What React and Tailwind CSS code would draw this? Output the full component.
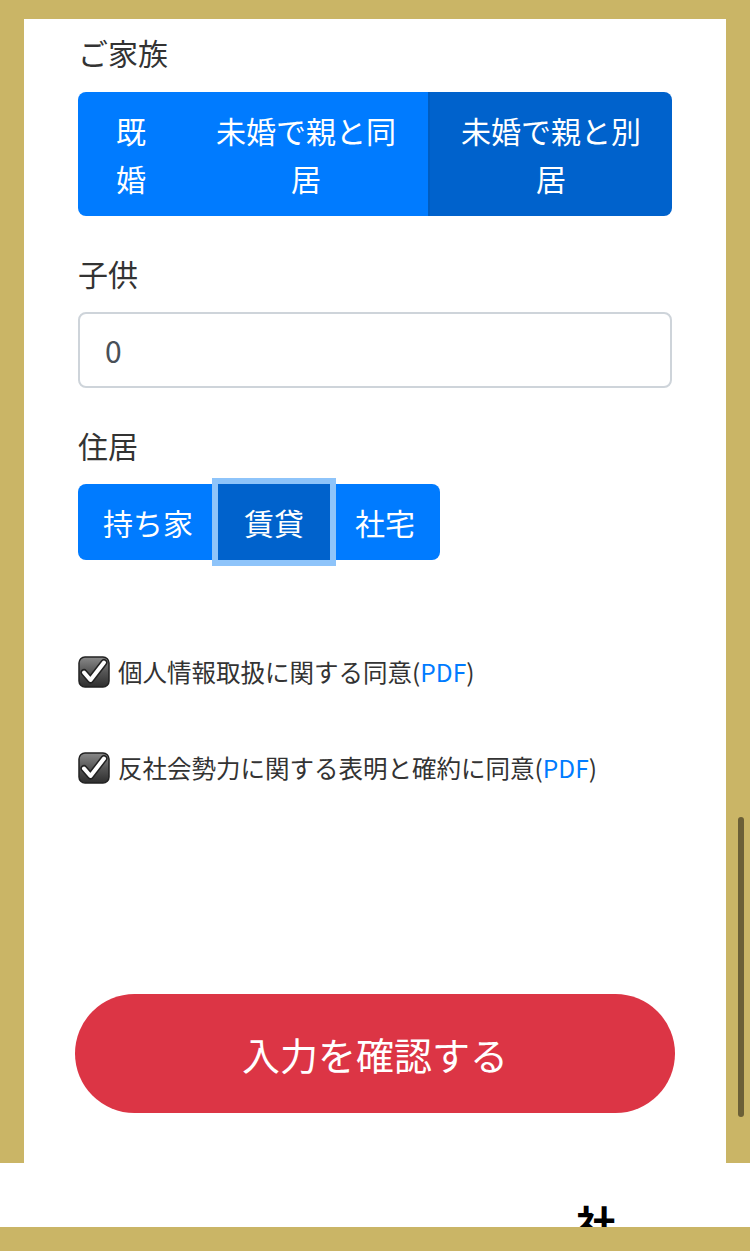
import React from "react";

const font = { fontFamily: '"Noto Sans CJK JP", "Noto Sans", sans-serif' };

function CheckBox() {
  return (
    <svg width="32" height="32" viewBox="0 0 32 32" className="shrink-0">
      <defs>
        <linearGradient id="cbg" x1="0" y1="0" x2="0" y2="1">
          <stop offset="0" stopColor="#8a8a8a" />
          <stop offset="0.5" stopColor="#555" />
          <stop offset="1" stopColor="#2e2e2e" />
        </linearGradient>
      </defs>
      <rect x="1" y="1" width="30" height="30" rx="6" fill="url(#cbg)" stroke="#222" strokeWidth="1.5" />
      <path d="M6 16.5 L12.5 24 L26 6.5" fill="none" stroke="#222" strokeWidth="7" strokeLinecap="round" strokeLinejoin="round" />
      <path d="M6 16.5 L12.5 24 L26 6.5" fill="none" stroke="#fff" strokeWidth="4" strokeLinecap="round" strokeLinejoin="round" />
    </svg>
  );
}

export default function App() {
  return (
    <div className="relative w-[750px] h-[1251px] bg-[#cab566] overflow-hidden flex flex-col" style={font}>
      <div className="h-[19px] shrink-0" />
      <div className="mx-[24px] h-[1144px] shrink-0 bg-white px-[54px] pt-[9px] flex flex-col">
        <div className="text-[30px] leading-[48px] text-[#333]">ご家族</div>
        <div className="mt-[16px] flex h-[124px] rounded-[8px] overflow-hidden text-white text-[30px] leading-[48px] text-center">
          <div className="w-[106px] bg-[#007bff] flex items-center justify-center">既<br />婚</div>
          <div className="w-[244px] bg-[#007bff] flex items-center justify-center">未婚で親と同<br />居</div>
          <div className="w-[244px] bg-[#0062cc] border-l-2 border-[#005cbf] flex items-center justify-center">未婚で親と別<br />居</div>
        </div>

        <div className="mt-[33px] text-[30px] leading-[48px] text-[#333]">子供</div>
        <div className="mt-[15px] h-[76px] rounded-[8px] border-2 border-[#ced4da] px-[25px] flex items-center text-[30px] text-[#495057]">0</div>

        <div className="mt-[33px] text-[30px] leading-[48px] text-[#333]">住居</div>
        <div className="mt-[15px] flex h-[76px] text-white text-[30px]">
          <div className="w-[140px] bg-[#007bff] rounded-l-[8px] flex items-center justify-center">持ち家</div>
          <div className="relative z-10 w-[112px] bg-[#0062cc] shadow-[0_0_0_6px_#8ec4fa] flex items-center justify-center">賃貸</div>
          <div className="w-[110px] bg-[#007bff] rounded-r-[8px] flex items-center justify-center">社宅</div>
        </div>

        <div className="mt-[96px] flex items-center gap-[8px] text-[24.5px] leading-[32px] text-[#333]">
          <CheckBox />
          <span>個人情報取扱に関する同意(<span className="text-[#007bff]">PDF</span>)</span>
        </div>
        <div className="mt-[64px] flex items-center gap-[8px] text-[24.5px] leading-[32px] text-[#333]">
          <CheckBox />
          <span>反社会勢力に関する表明と確約に同意(<span className="text-[#007bff]">PDF</span>)</span>
        </div>

        <div className="mt-[210px] -mx-[3px] h-[119px] rounded-full bg-[#dc3545] flex items-center justify-center text-white text-[38px]">
          入力を確認する
        </div>
      </div>
      <div className="h-[64px] shrink-0 bg-white overflow-hidden pl-[576px] pt-[40px]">
        <span className="block text-[40px] leading-none font-bold text-black" style={{ fontFamily: '"Noto Sans CJK JP", serif' }}>社</span>
      </div>
      <div className="flex-1 bg-[#cab566]" />
      <div className="absolute left-[738px] top-[817px] w-[6px] h-[300px] rounded-full bg-[#6b5f36]" />
    </div>
  );
}
